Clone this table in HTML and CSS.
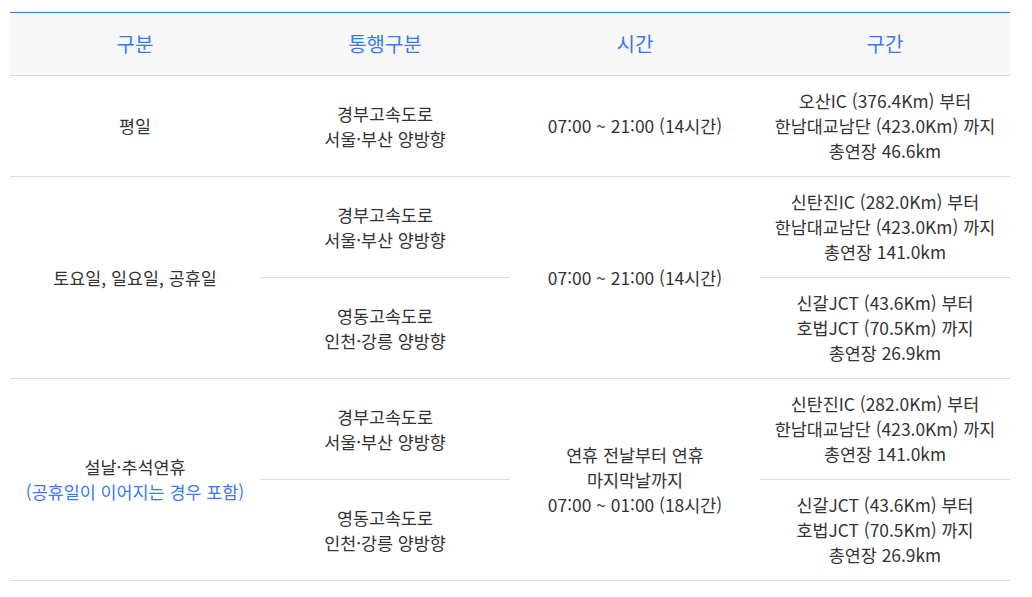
FILE: index.html
```html
<!DOCTYPE html>
<html lang="ko">
<head>
<meta charset="utf-8">
<link rel="stylesheet" href="styles.css">
</head>
<body>
<div class="wrap">
<table class="tbl">
  <colgroup><col class="c"><col class="c"><col class="c"><col class="c"></colgroup>
  <thead>
    <tr><th>구분</th><th>통행구분</th><th>시간</th><th>구간</th></tr>
  </thead>
  <tbody>
    <tr class="grp">
      <td>평일</td>
      <td>경부고속도로<br>서울·부산 양방향</td>
      <td>07:00 ~ 21:00 (14시간)</td>
      <td>오산IC (376.4Km) 부터<br>한남대교남단 (423.0Km) 까지<br>총연장 46.6km</td>
    </tr>
    <tr>
      <td rowspan="2" class="grp">토요일, 일요일, 공휴일</td>
      <td>경부고속도로<br>서울·부산 양방향</td>
      <td rowspan="2" class="grp">07:00 ~ 21:00 (14시간)</td>
      <td>신탄진IC (282.0Km) 부터<br>한남대교남단 (423.0Km) 까지<br>총연장 141.0km</td>
    </tr>
    <tr class="grp">
      <td>영동고속도로<br>인천·강릉 양방향</td>
      <td>신갈JCT (43.6Km) 부터<br>호법JCT (70.5Km) 까지<br>총연장 26.9km</td>
    </tr>
    <tr>
      <td rowspan="2" class="grp">설날·추석연휴<br><span class="note">(공휴일이 이어지는 경우 포함)</span></td>
      <td>경부고속도로<br>서울·부산 양방향</td>
      <td rowspan="2" class="grp">연휴 전날부터 연휴<br>마지막날까지<br>07:00 ~ 01:00 (18시간)</td>
      <td>신탄진IC (282.0Km) 부터<br>한남대교남단 (423.0Km) 까지<br>총연장 141.0km</td>
    </tr>
    <tr class="grp">
      <td>영동고속도로<br>인천·강릉 양방향</td>
      <td>신갈JCT (43.6Km) 부터<br>호법JCT (70.5Km) 까지<br>총연장 26.9km</td>
    </tr>
  </tbody>
</table>
</div>
</body>
</html>
```
FILE: styles.css
```css
html, body {
  margin: 0;
  padding: 0;
  background: #fff;
}
.wrap {
  padding: 12px 22px 0 10px;
}
.tbl {
  width: 1000px;
  border-collapse: collapse;
  table-layout: fixed;
  font-family: "Noto Sans CJK KR", "Noto Sans", sans-serif;
  color: #333;
}
.tbl .c { width: 250px; }
.tbl th {
  background: #f8f8f8;
  border-top: 1px solid #3a7cf0;
  border-bottom: 1px solid #d9d9d9;
  color: #3a78ee;
  font-size: 20px;
  font-weight: 400;
  line-height: 30px;
  padding: 16px 10px;
  text-align: center;
}
.tbl td {
  font-size: 17.4px;
  line-height: 25px;
  padding: 12px 8px 13px;
  text-align: center;
  vertical-align: middle;
  border-bottom: 1px solid #dddddd;
}
.note {
  color: #3a78ee;
}
```
